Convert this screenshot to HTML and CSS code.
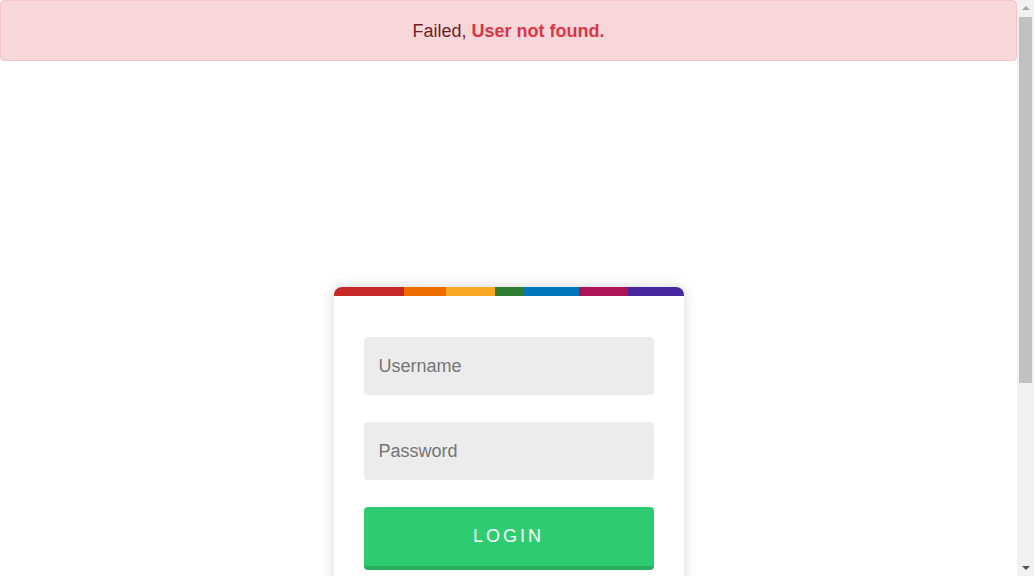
FILE: index.html
```html
<!DOCTYPE html>
<html lang="en">
<head>
<meta charset="utf-8">
<title>Login</title>
<link rel="stylesheet" href="styles.css">
</head>
<body>
<div class="alert">Failed, <strong class="alert-strong">User not found.</strong></div>
<main class="page">
  <div class="card">
    <div class="rainbow">
      <span class="seg seg-red"></span>
      <span class="seg seg-orange"></span>
      <span class="seg seg-yellow"></span>
      <span class="seg seg-green"></span>
      <span class="seg seg-blue"></span>
      <span class="seg seg-pink"></span>
      <span class="seg seg-purple"></span>
    </div>
    <form class="form">
      <input class="field" type="text" placeholder="Username">
      <input class="field" type="password" placeholder="Password">
      <button class="btn" type="button">LOGIN</button>
    </form>
  </div>
</main>
<div class="scrollbar" aria-hidden="true">
  <div class="sb-btn"><span class="sb-arrow-up"></span></div>
  <div class="sb-thumb"></div>
  <div class="sb-rest"></div>
  <div class="sb-btn"><span class="sb-arrow-down"></span></div>
</div>
</body>
</html>
```
FILE: styles.css
```css
* { box-sizing: border-box; }
html, body { margin: 0; padding: 0; }
body {
  font-family: "Liberation Sans", Arial, sans-serif;
  background: #fff;
  color: #333;
  padding-right: 17px;
}
.alert {
  height: 61px;
  display: flex;
  align-items: center;
  justify-content: center;
  background: #f8d7da;
  border: 1px solid #f5c6cb;
  border-radius: 4px;
  color: #721c24;
  font-size: 18px;
  padding-top: 1px;
}
.alert-strong {
  color: #dc3545;
  margin-left: 5px;
}
.page {
  display: flex;
  justify-content: center;
  padding-top: 226px;
  padding-bottom: 236px;
}
.card {
  width: 350px;
  background: #fff;
  border-radius: 8px;
  box-shadow: 0 0 14px rgba(0, 0, 0, 0.16);
  overflow: hidden;
}
.rainbow {
  display: flex;
  height: 9px;
}
.seg { display: block; height: 100%; }
.seg-red { flex: 10; background: #c62828; }
.seg-orange { flex: 6; background: #ef6c00; }
.seg-yellow { flex: 7; background: #f9a825; }
.seg-green { flex: 4; background: #2e7d32; }
.seg-blue { flex: 8; background: #0277bd; }
.seg-pink { flex: 7; background: #ad1457; }
.seg-purple { flex: 8; background: #4527a0; }
.form {
  display: flex;
  flex-direction: column;
  gap: 27px;
  padding: 41px 30px 48px;
}
.field {
  height: 58px;
  border: none;
  border-radius: 4px;
  background: #ececec;
  padding: 0 15px;
  font-family: "Liberation Sans", Arial, sans-serif;
  font-size: 18px;
  color: #333;
  outline: none;
}
.field::placeholder { color: #757575; }
.btn {
  height: 63px;
  border: none;
  border-bottom: 4px solid #27ae60;
  border-radius: 4px;
  background: #2ecc71;
  color: #fff;
  font-family: "Liberation Sans", Arial, sans-serif;
  font-size: 18px;
  letter-spacing: 3px;
  padding: 0;
}

/* imitation of the classic browser scrollbar */
.scrollbar {
  position: fixed;
  top: 0;
  right: 0;
  width: 17px;
  height: 100vh;
  background: #f1f1f1;
  display: flex;
  flex-direction: column;
}
.sb-btn {
  height: 17px;
  display: flex;
  align-items: center;
  justify-content: center;
}
.sb-arrow-up {
  width: 0; height: 0;
  border-left: 4px solid transparent;
  border-right: 4px solid transparent;
  border-bottom: 4px solid #a3a3a3;
  margin-top: -1px;
}
.sb-arrow-down {
  width: 0; height: 0;
  border-left: 4px solid transparent;
  border-right: 4px solid transparent;
  border-top: 4px solid #505050;
  margin-top: 1px;
}
.sb-thumb {
  height: 366px;
  margin: 0 2px;
  background: #c1c1c1;
}
.sb-rest { flex: 1; }
```
